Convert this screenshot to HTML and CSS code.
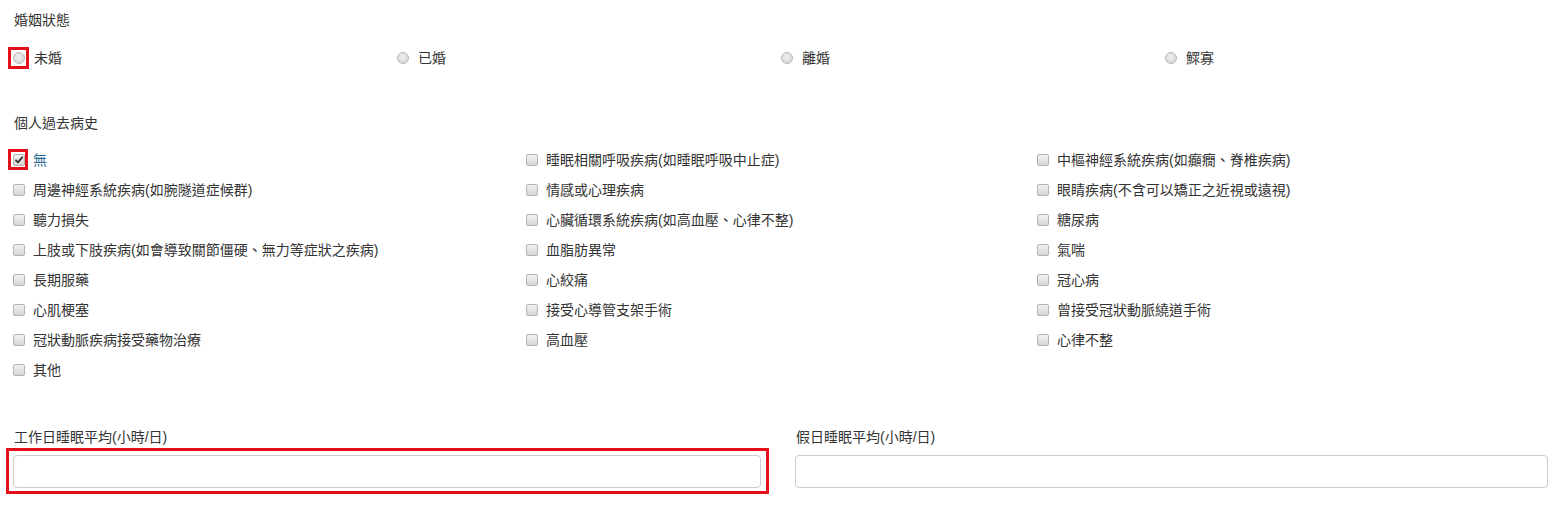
FILE: index.html
```html
<!DOCTYPE html>
<html lang="zh-Hant">
<head>
<meta charset="utf-8">
<title>Form</title>
<link rel="stylesheet" href="styles.css">
</head>
<body>
<div class="page">
  <div class="title t-marital">婚姻狀態</div>
  <div class="radio-row">
    <label class="opt"><span class="radio hl"></span><span class="txt">未婚</span></label>
    <label class="opt"><span class="radio"></span><span class="txt">已婚</span></label>
    <label class="opt"><span class="radio"></span><span class="txt">離婚</span></label>
    <label class="opt"><span class="radio"></span><span class="txt">鰥寡</span></label>
  </div>

  <div class="title t-history">個人過去病史</div>
  <div class="check-grid">
    <label class="opt"><span class="cb checked hl"><svg viewBox="0 0 12 12" width="12" height="12"><path d="M2.4 6.4 L4.8 8.9 L9.8 2.8" fill="none" stroke="#333" stroke-width="2.2" stroke-linecap="round" stroke-linejoin="round"/></svg></span><span class="txt blue">無</span></label>
    <label class="opt"><span class="cb"></span><span class="txt">睡眠相關呼吸疾病(如睡眠呼吸中止症)</span></label>
    <label class="opt"><span class="cb"></span><span class="txt">中樞神經系統疾病(如癲癇、脊椎疾病)</span></label>

    <label class="opt"><span class="cb"></span><span class="txt">周邊神經系統疾病(如腕隧道症候群)</span></label>
    <label class="opt"><span class="cb"></span><span class="txt">情感或心理疾病</span></label>
    <label class="opt"><span class="cb"></span><span class="txt">眼睛疾病(不含可以矯正之近視或遠視)</span></label>

    <label class="opt"><span class="cb"></span><span class="txt">聽力損失</span></label>
    <label class="opt"><span class="cb"></span><span class="txt">心臟循環系統疾病(如高血壓、心律不整)</span></label>
    <label class="opt"><span class="cb"></span><span class="txt">糖尿病</span></label>

    <label class="opt"><span class="cb"></span><span class="txt">上肢或下肢疾病(如會導致關節僵硬、無力等症狀之疾病)</span></label>
    <label class="opt"><span class="cb"></span><span class="txt">血脂肪異常</span></label>
    <label class="opt"><span class="cb"></span><span class="txt">氣喘</span></label>

    <label class="opt"><span class="cb"></span><span class="txt">長期服藥</span></label>
    <label class="opt"><span class="cb"></span><span class="txt">心絞痛</span></label>
    <label class="opt"><span class="cb"></span><span class="txt">冠心病</span></label>

    <label class="opt"><span class="cb"></span><span class="txt">心肌梗塞</span></label>
    <label class="opt"><span class="cb"></span><span class="txt">接受心導管支架手術</span></label>
    <label class="opt"><span class="cb"></span><span class="txt">曾接受冠狀動脈繞道手術</span></label>

    <label class="opt"><span class="cb"></span><span class="txt">冠狀動脈疾病接受藥物治療</span></label>
    <label class="opt"><span class="cb"></span><span class="txt">高血壓</span></label>
    <label class="opt"><span class="cb"></span><span class="txt">心律不整</span></label>

    <label class="opt"><span class="cb"></span><span class="txt">其他</span></label>
  </div>

  <div class="sleep-row">
    <div class="field">
      <div class="field-label">工作日睡眠平均(小時/日)</div>
      <div class="input-wrap hl-wrap"><input class="text-input" type="text"></div>
    </div>
    <div class="field">
      <div class="field-label">假日睡眠平均(小時/日)</div>
      <div class="input-wrap"><input class="text-input" type="text"></div>
    </div>
  </div>
</div>
</body>
</html>
```

FILE: styles.css
```css
* { box-sizing: border-box; }
html, body {
  margin: 0;
  padding: 0;
  background: #ffffff;
}
body {
  font-family: "Liberation Sans", "Noto Sans CJK TC", sans-serif;
  font-size: 14px;
  color: #333333;
}
.page {
  width: 1549px;
  padding-left: 13px;
  padding-bottom: 20px;
}
.title {
  line-height: 20px;
  height: 20px;
  padding-left: 1px;
}
.t-marital { margin-top: 10px; }
.t-history { margin-top: 45px; }

.radio-row {
  margin-top: 18px;
  display: grid;
  grid-template-columns: repeat(4, 384px);
  height: 20px;
}
.opt {
  display: flex;
  align-items: center;
  height: 20px;
  line-height: 20px;
  white-space: nowrap;
}
.radio {
  flex: none;
  width: 12px;
  height: 12px;
  border-radius: 50%;
  border: 1px solid #b9b9b9;
  background: radial-gradient(circle at 45% 40%, #f0f0f0 0%, #dcdcdc 60%, #cfcfcf 100%);
  margin-right: 9px;
}
.cb {
  flex: none;
  width: 12px;
  height: 12px;
  border-radius: 2px;
  border: 1px solid #b4b4b4;
  background: linear-gradient(#f2f2f2, #d6d6d6);
  margin-right: 8px;
  display: flex;
  align-items: center;
  justify-content: center;
}
.cb svg { display: block; }

/* red highlight frames drawn over the controls */
.hl { position: relative; }
.hl::after {
  content: "";
  position: absolute;
  top: -6px;
  left: -6px;
  right: -5px;
  bottom: -6px;
  border: 3px solid #e3101c;
  border-radius: 0;
}
.cb.hl::after {
  top: -6px;
  left: -6px;
  right: -4px;
  bottom: -5px;
}
.txt.blue { color: #2d6b93; }

.check-grid {
  margin-top: 12px;
  display: grid;
  grid-template-columns: 513px 511px 512px;
  grid-auto-rows: 30px;
  align-items: center;
}
.check-grid .opt { height: 30px; }

.sleep-row {
  margin-top: 42px;
  display: grid;
  grid-template-columns: 748px 753px;
  column-gap: 34px;
}
.field-label {
  line-height: 20px;
  height: 20px;
  padding-left: 1px;
}
.input-wrap {
  margin-top: 8px;
}
.hl-wrap { position: relative; }
.hl-wrap::after {
  content: "";
  position: absolute;
  top: -7px;
  left: -7px;
  right: -8px;
  bottom: -6px;
  border: 3px solid #e3101c;
  pointer-events: none;
}
.text-input {
  display: block;
  width: 100%;
  height: 33px;
  border: 1px solid #cccccc;
  border-radius: 4px;
  background: #ffffff;
  font: inherit;
  padding: 6px 12px;
}
```
